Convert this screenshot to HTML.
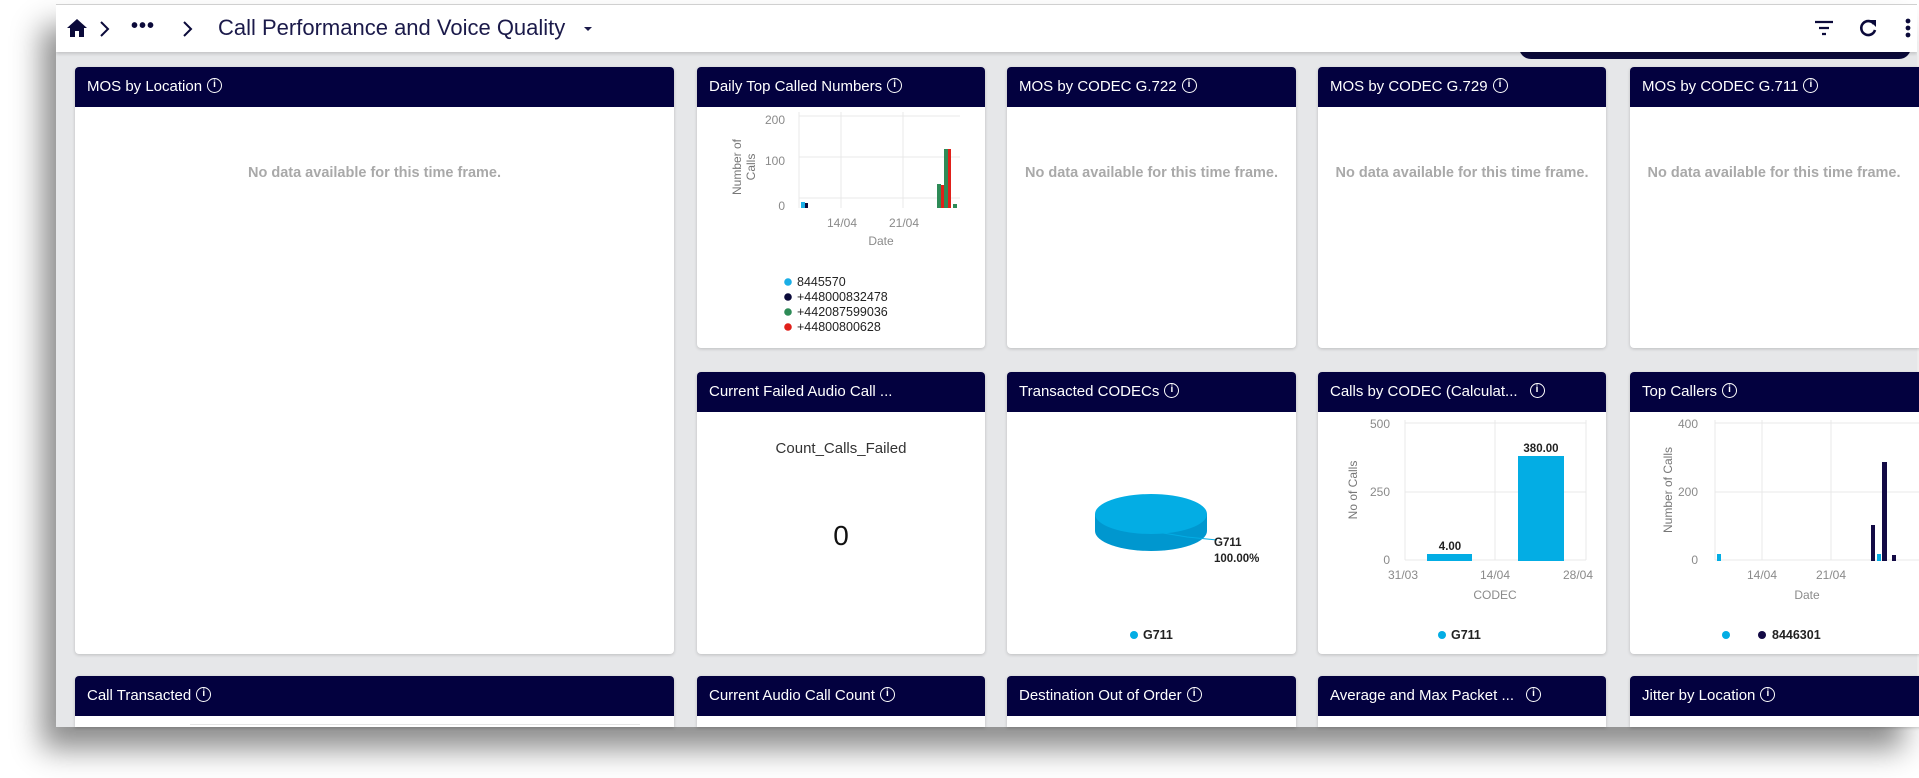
<!DOCTYPE html>
<html><head><meta charset="utf-8"><style>
*{margin:0;padding:0;box-sizing:border-box}
body{width:1919px;height:778px;background:#fff;position:relative;overflow:hidden;font-family:"Liberation Sans",sans-serif}
#frame{position:absolute;left:56px;top:4px;width:1861px;height:723px;background:#e6e7e9;box-shadow:-14px 22px 28px rgba(0,0,0,.45);overflow:hidden;border-top:1px solid #d0d0d0}
#bar{position:absolute;left:0;top:0;width:1861px;height:47px;background:#fff;box-shadow:0 2px 3px rgba(0,0,0,.15);z-index:2}
#pill{position:absolute;left:1463px;top:38px;width:392px;height:16px;background:#0b0a3a;border-radius:0 0 12px 12px;z-index:1}
.card{position:absolute;background:#fff;border-radius:4px;box-shadow:0 1px 3px rgba(0,0,0,.18);overflow:hidden}
.hd{height:40px;background:#03013f;color:#fff;font-size:15px;line-height:40px;padding-left:12px;white-space:nowrap}
.i{display:inline-block;width:15px;height:15px;border:1.6px solid #fff;border-radius:50%;font-size:10px;line-height:12px;text-align:center;font-weight:bold;vertical-align:middle;margin-left:5px;margin-top:-4px}
.nd{position:absolute;top:98px;width:100%;text-align:center;color:#a9a9a9;font-size:14.5px;font-weight:bold}
svg text{font-family:"Liberation Sans",sans-serif}
</style></head><body>
<div id="frame">
<div id="bar">
 <svg style="position:absolute;left:10px;top:13px" width="22" height="20" viewBox="0 0 22 20"><path d="M11 1 L1 10 H4 V19 H9 V13 H13 V19 H18 V10 H21 Z" fill="#0b0a3a"/></svg>
 <svg style="position:absolute;left:43px;top:15px" width="12" height="18"><path d="M2 2 L9 9 L2 16" stroke="#0b0a3a" stroke-width="2" fill="none"/></svg>
 <div style="position:absolute;left:75px;top:10px;font-size:20px;color:#0b0a3a;font-weight:bold;letter-spacing:1px">•••</div>
 <svg style="position:absolute;left:126px;top:15px" width="12" height="18"><path d="M2 2 L9 9 L2 16" stroke="#0b0a3a" stroke-width="2" fill="none"/></svg>
 <div style="position:absolute;left:162px;top:10px;font-size:22px;color:#1b1a4a">Call Performance and Voice Quality</div>
 <svg style="position:absolute;left:527px;top:21px" width="10" height="6"><path d="M1 1 L5 5 L9 1Z" fill="#1b1a4a"/></svg>
 <svg style="position:absolute;left:1757px;top:14px" width="22" height="18"><path d="M2 3H20M6 9H16M9 15H13" stroke="#0b0a3a" stroke-width="2.2"/></svg>
 <svg style="position:absolute;left:1801px;top:12px" width="22" height="22" viewBox="0 0 22 22"><path d="M17 7 A7 7 0 1 0 18 13" stroke="#0b0a3a" stroke-width="2.6" fill="none"/><path d="M12 3 H19 V10Z" fill="#0b0a3a"/></svg>
 <svg style="position:absolute;left:1848px;top:12px" width="8" height="24"><circle cx="4" cy="4" r="2.4" fill="#0b0a3a"/><circle cx="4" cy="11" r="2.4" fill="#0b0a3a"/><circle cx="4" cy="18" r="2.4" fill="#0b0a3a"/></svg>
</div>
<div id="pill"></div>
</div>

<div class="card" style="left:75px;top:67px;width:599px;height:587px"><div class="hd">MOS by Location<span class="i">i</span></div><div class="nd" style="top:98px">No data available for this time frame.</div></div>

<div class="card" style="left:697px;top:67px;width:288px;height:281px"><div class="hd">Daily Top Called Numbers<span class="i">i</span></div>
<svg style="position:absolute;left:0;top:0" width="288" height="281">
 <g stroke="#e8e8e8" stroke-width="1"><line x1="102" y1="49" x2="263" y2="49"/><line x1="102" y1="90" x2="263" y2="90"/><line x1="102" y1="131" x2="263" y2="131"/><line x1="144" y1="45" x2="144" y2="141"/><line x1="206" y1="45" x2="206" y2="141"/><line x1="102" y1="45" x2="102" y2="141"/></g>
 <g fill="#8a8a8a" font-size="12" text-anchor="end"><text x="88" y="57">200</text><text x="88" y="98">100</text><text x="88" y="143">0</text></g>
 <g fill="#8a8a8a" font-size="12" text-anchor="middle"><text x="145" y="160">14/04</text><text x="207" y="160">21/04</text><text x="184" y="178">Date</text></g>
 <text transform="translate(44,100) rotate(-90)" fill="#777" font-size="12" text-anchor="middle">Number of</text>
 <text transform="translate(58,100) rotate(-90)" fill="#777" font-size="12" text-anchor="middle">Calls</text>
 <rect x="104" y="135" width="4" height="6" fill="#1aaee6"/><rect x="108" y="136" width="3" height="5" fill="#0b0a3a"/>
 <rect x="240" y="117" width="4" height="24" fill="#2e8b57"/><rect x="244" y="118" width="3" height="23" fill="#e0201a"/>
 <rect x="247" y="82" width="4" height="59" fill="#2e8b57"/><rect x="251" y="82" width="3" height="59" fill="#e0201a"/>
 <rect x="256" y="137" width="4" height="4" fill="#2e8b57"/>
 <g font-size="12.5" fill="#222"><circle cx="91" cy="215" r="3.8" fill="#1aaee6"/><text x="100" y="219">8445570</text>
 <circle cx="91" cy="230" r="3.8" fill="#0b0a3a"/><text x="100" y="234">+448000832478</text>
 <circle cx="91" cy="245" r="3.8" fill="#2e8b57"/><text x="100" y="249">+442087599036</text>
 <circle cx="91" cy="260" r="3.8" fill="#e0201a"/><text x="100" y="264">+44800800628</text></g>
</svg></div>

<div class="card" style="left:1007px;top:67px;width:289px;height:281px"><div class="hd">MOS by CODEC G.722<span class="i">i</span></div><div class="nd">No data available for this time frame.</div></div>
<div class="card" style="left:1318px;top:67px;width:288px;height:281px"><div class="hd">MOS by CODEC G.729<span class="i">i</span></div><div class="nd">No data available for this time frame.</div></div>
<div class="card" style="left:1630px;top:67px;width:300px;height:281px;border-radius:4px 0 0 4px"><div class="hd">MOS by CODEC G.711<span class="i">i</span></div><div class="nd" style="width:288px">No data available for this time frame.</div></div>

<div class="card" style="left:697px;top:372px;width:288px;height:282px"><div class="hd">Current Failed Audio Call ...</div>
 <div style="position:absolute;top:68px;width:100%;text-align:center;font-size:15px;color:#333">Count_Calls_Failed</div>
 <div style="position:absolute;top:148px;width:100%;text-align:center;font-size:28px;color:#111">0</div></div>

<div class="card" style="left:1007px;top:372px;width:289px;height:282px"><div class="hd">Transacted CODECs<span class="i">i</span></div>
<svg style="position:absolute;left:0;top:0" width="289" height="282">
 <path d="M88 142 V159 A56 20 0 0 0 200 159 V142Z" fill="#0097cf"/>
 <ellipse cx="144" cy="142" rx="56" ry="20" fill="#03ade4"/>
 <path d="M144 159 L180 165 L210 168" stroke="#03ade4" stroke-width="1" fill="none"/>
 <g font-size="11.5" font-weight="bold" fill="#222"><text x="207" y="174">G711</text><text x="207" y="190">100.00%</text></g>
 <circle cx="127" cy="263" r="4" fill="#03ade4"/><text x="136" y="267" font-size="12.5" font-weight="bold" fill="#222">G711</text>
</svg></div>

<div class="card" style="left:1318px;top:372px;width:288px;height:282px"><div class="hd">Calls by CODEC (Calculat...<span class="i" style="margin-left:12px">i</span></div>
<svg style="position:absolute;left:0;top:0" width="288" height="282">
 <g stroke="#e8e8e8"><line x1="87" y1="51" x2="268" y2="51"/><line x1="87" y1="120" x2="268" y2="120"/><line x1="87" y1="188" x2="268" y2="188"/><line x1="87" y1="48" x2="87" y2="188"/><line x1="177" y1="48" x2="177" y2="188"/><line x1="268" y1="48" x2="268" y2="188"/></g>
 <g fill="#8a8a8a" font-size="12" text-anchor="end"><text x="72" y="56">500</text><text x="72" y="124">250</text><text x="72" y="192">0</text></g>
 <rect x="109" y="182" width="45" height="7" fill="#03ade4"/><rect x="200" y="84" width="46" height="105" fill="#03ade4"/>
 <g font-size="11.5" font-weight="bold" fill="#222" text-anchor="middle"><text x="132" y="178">4.00</text><text x="223" y="80">380.00</text></g>
 <g fill="#8a8a8a" font-size="12" text-anchor="middle"><text x="85" y="207">31/03</text><text x="177" y="207">14/04</text><text x="260" y="207">28/04</text><text x="177" y="227">CODEC</text></g>
 <text transform="translate(39,118) rotate(-90)" fill="#777" font-size="12" text-anchor="middle">No of Calls</text>
 <circle cx="124" cy="263" r="4" fill="#03ade4"/><text x="133" y="267" font-size="12.5" font-weight="bold" fill="#222">G711</text>
</svg></div>

<div class="card" style="left:1630px;top:372px;width:300px;height:282px;border-radius:4px 0 0 4px"><div class="hd">Top Callers<span class="i">i</span></div>
<svg style="position:absolute;left:0;top:0" width="300" height="282">
 <g stroke="#e8e8e8"><line x1="85" y1="51" x2="300" y2="51"/><line x1="85" y1="120" x2="300" y2="120"/><line x1="85" y1="188" x2="300" y2="188"/><line x1="85" y1="48" x2="85" y2="188"/><line x1="132" y1="48" x2="132" y2="188"/><line x1="201" y1="48" x2="201" y2="188"/></g>
 <g fill="#8a8a8a" font-size="12" text-anchor="end"><text x="68" y="56">400</text><text x="68" y="124">200</text><text x="68" y="192">0</text></g>
 <g fill="#8a8a8a" font-size="12" text-anchor="middle"><text x="132" y="207">14/04</text><text x="201" y="207">21/04</text><text x="177" y="227">Date</text></g>
 <text transform="translate(42,118) rotate(-90)" fill="#777" font-size="12" text-anchor="middle">Number of Calls</text>
 <rect x="87" y="182" width="4" height="7" fill="#03ade4"/>
 <rect x="241" y="153" width="4" height="36" fill="#130a45"/><rect x="252" y="90" width="5" height="99" fill="#130a45"/><rect x="247" y="182" width="4" height="7" fill="#03ade4"/><rect x="262" y="183" width="4" height="6" fill="#130a45"/>
 <circle cx="96" cy="263" r="4" fill="#03ade4"/><circle cx="132" cy="263" r="4" fill="#130a45"/><text x="142" y="267" font-size="12.5" font-weight="bold" fill="#222">8446301</text>
</svg></div>

<div class="card" style="left:75px;top:676px;width:599px;height:51px;border-radius:4px 4px 0 0"><div class="hd">Call Transacted<span class="i">i</span></div><div style="position:absolute;left:115px;top:48px;width:450px;border-top:1px solid #e5e5e5"></div></div>
<div class="card" style="left:697px;top:676px;width:288px;height:51px;border-radius:4px 4px 0 0"><div class="hd">Current Audio Call Count<span class="i">i</span></div></div>
<div class="card" style="left:1007px;top:676px;width:289px;height:51px;border-radius:4px 4px 0 0"><div class="hd">Destination Out of Order<span class="i">i</span></div></div>
<div class="card" style="left:1318px;top:676px;width:288px;height:51px;border-radius:4px 4px 0 0"><div class="hd">Average and Max Packet ...<span class="i" style="margin-left:12px">i</span></div></div>
<div class="card" style="left:1630px;top:676px;width:300px;height:51px;border-radius:4px 0 0 0"><div class="hd">Jitter by Location<span class="i">i</span></div></div>
</body></html>
